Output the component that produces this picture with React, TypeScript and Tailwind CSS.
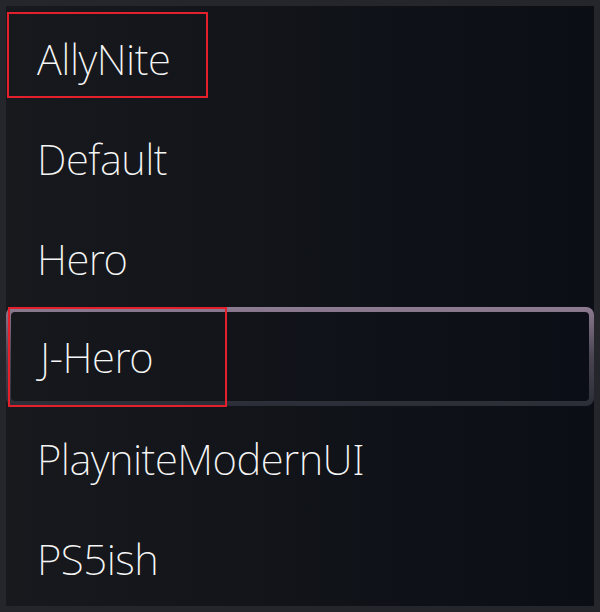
const themes = ["AllyNite", "Default", "Hero", "J-Hero", "PlayniteModernUI", "PS5ish"];

function ThemeRow({ name, selected, focused }: { name: string; selected?: boolean; focused?: string }) {
  const label = (
    <span className="text-[42px] font-extralight leading-none tracking-[-0.5px] text-[#f6f6f6]">{name}</span>
  );

  return (
    <div className="relative flex h-[100px] items-center">
      {selected ? (
        <div className="h-[99px] w-full rounded-[8px] bg-gradient-to-b from-[#8e7c92] via-[#4a4552] to-[#2b2e37] p-[5px]">
          <div className="flex h-full items-center rounded-[4px] bg-gradient-to-r from-[#16181c] to-[#0b0e16] pl-[29px] pt-[2px]">
            {label}
          </div>
        </div>
      ) : (
        <div className="pl-[31px] pt-[6px]">{label}</div>
      )}
      {focused && <div className={focused} />}
    </div>
  );
}

export default function App() {
  return (
    <div
      className="h-[612px] w-[600px] bg-[#25262b] p-[6px]"
      style={{ fontFamily: '"Noto Sans", "Open Sans", sans-serif' }}
    >
      <div className="flex h-[600px] flex-col bg-gradient-to-r from-[#17191d] to-[#0b0e15]">
        {themes.map((t) => (
          <ThemeRow
            key={t}
            name={t}
            selected={t === "J-Hero"}
            focused={
              t === "AllyNite"
                ? "absolute left-[1px] top-[6px] h-[86px] w-[201px] border-2 border-[#e3202b]"
                : t === "J-Hero"
                  ? "absolute left-[2px] top-[1px] h-[100px] w-[219px] border-2 border-[#e3202b]"
                  : undefined
            }
          />
        ))}
      </div>
    </div>
  );
}
